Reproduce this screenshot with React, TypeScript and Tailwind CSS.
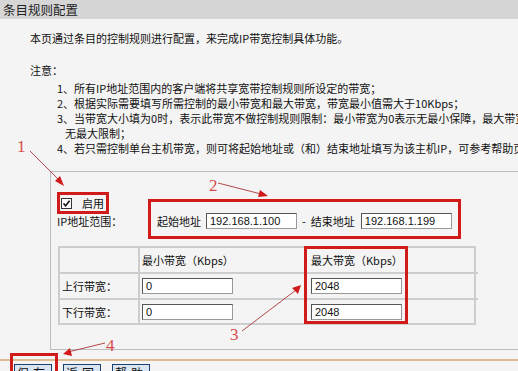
const Input = ({ value, className = "" }: { value: string; className?: string }) => (
  <div
    className={`flex h-[16px] w-[91px] items-center border border-t-[#555] border-l-[#555] border-r-[#999] border-b-[#999] bg-white pl-[3px] font-['Liberation_Sans',sans-serif] text-[11px] leading-[14px] text-[#111] ${className}`}
  >
    {value}
  </div>
);

const Btn = ({ label }: { label: string }) => (
  <div className="flex h-[18px] w-[38px] items-center justify-center border border-[#1f3f6e] bg-[#d9e5f2] text-[12px] leading-[16px] tracking-[4px] text-[#111]">
    {label}
  </div>
);

export default function App() {
  return (
    <div className="relative h-[371px] w-[518px] overflow-hidden bg-[#f4f4f4] font-['Noto_Sans_CJK_SC',sans-serif] text-[11px] text-[#111]">
      <div className="h-[19px] bg-[#d6d6d6] pl-[3px] text-[12.5px] leading-[19px] text-[#222]">条目规则配置</div>

      <div className="whitespace-nowrap pl-[30px] pt-[12px] leading-[14px]">
        <div>本页通过条目的控制规则进行配置，来完成IP带宽控制具体功能。</div>
        <div className="mt-[18px]">注意：</div>
        <div className="mt-[4px] pl-[27px] leading-[15px]">
          <div>1、所有IP地址范围内的客户端将共享宽带控制规则所设定的带宽；</div>
          <div>2、根据实际需要填写所需控制的最小带宽和最大带宽，带宽最小值需大于10Kbps；</div>
          <div>3、当带宽大小填为0时，表示此带宽不做控制规则限制：最小带宽为0表示无最小保障，最大带宽为0表示</div>
          <div className="pl-[8px]">无最大限制；</div>
          <div>4、若只需控制单台主机带宽，则可将起始地址或（和）结束地址填写为该主机IP，可参考帮助页面。</div>
        </div>
      </div>

      <div className="ml-[50px] mt-[15px] box-border h-[179px] border-b border-l border-t border-[#bdbdbd] pl-[6px] pt-[20px]">
        <div className="flex">
          <div className="w-[91px]">
            <div className="flex h-[22px] w-[52px] items-center border-[3px] border-[#d11a1a] pl-[1px]">
              <div className="flex h-[11px] w-[11px] items-center justify-center border border-[#333] bg-white">
                <svg width="9" height="9" viewBox="0 0 9 9">
                  <path d="M1.5 4.5 L3.6 6.8 L7.6 1.8" fill="none" stroke="#111" strokeWidth="1.6" />
                </svg>
              </div>
              <span className="ml-[10px] leading-[14px]">启用</span>
            </div>
            <div className="leading-[14px]">IP地址范围：</div>
          </div>
          <div className="mt-[7px] flex h-[40px] w-[313px] items-center border-[3px] border-[#d11a1a] pl-[6px] pt-[4px]">
            <span className="leading-[14px]">起始地址</span>
            <Input value="192.168.1.100" className="ml-[5px]" />
            <span className="ml-[5px] leading-[14px]">-</span>
            <span className="ml-[5px] leading-[14px]">结束地址</span>
            <Input value="192.168.1.199" className="ml-[6px]" />
          </div>
        </div>

        <div className="relative ml-[1px] mt-[7px] w-[418px]">
          <div className="grid grid-cols-[80px_167px_171px] border-2 border-[#cdcdcd] leading-[14px]">
            <div className="h-[24px] border-r-2 border-[#cdcdcd]"></div>
            <div className="flex h-[24px] items-center border-r-2 border-[#cdcdcd] pl-[2px]">最小带宽（Kbps）</div>
            <div className="flex h-[24px] items-center pl-[4px]">最大带宽（Kbps）</div>

            <div className="flex h-[26px] items-center border-r-2 border-t-2 border-[#cdcdcd] pl-[2px]">上行带宽：</div>
            <div className="flex h-[26px] items-center border-r-2 border-t-2 border-[#cdcdcd] pl-[2px]">
              <Input value="0" />
            </div>
            <div className="flex h-[26px] items-center border-t-2 border-[#cdcdcd] pl-[4px]">
              <Input value="2048" />
            </div>

            <div className="flex h-[25px] items-center border-r-2 border-t-2 border-[#cdcdcd] pl-[2px]">下行带宽：</div>
            <div className="flex h-[25px] items-center border-r-2 border-t-2 border-[#cdcdcd] pl-[2px]">
              <Input value="0" />
            </div>
            <div className="flex h-[25px] items-center border-t-2 border-[#cdcdcd] pl-[4px]">
              <Input value="2048" />
            </div>
          </div>
          <div className="absolute left-[246px] top-0 h-[78px] w-[104px] border-[3px] border-[#d11a1a]"></div>
        </div>
      </div>

      <div className="mt-[9px] h-[2px] bg-[#dcbd92]"></div>
      <div className="flex gap-[11px] pl-[14px] pt-[3px]">
        <Btn label="保存" />
        <Btn label="返回" />
        <Btn label="帮助" />
      </div>
      <div className="absolute left-[10px] top-[353px] h-[25px] w-[48px] border-[3px] border-[#d11a1a]"></div>

      <svg className="pointer-events-none absolute left-0 top-0" width="518" height="371" viewBox="0 0 518 371">
        <g fontFamily="'Liberation Serif', serif" fontSize="17" fill="#d94a4a">
          <text x="17" y="152">1</text>
          <text x="209" y="191">2</text>
          <text x="230" y="340">3</text>
          <text x="106" y="351">4</text>
        </g>
        <g stroke="#b04848" strokeWidth="1" fill="none">
          <line x1="30" y1="151" x2="60" y2="181" />
          <line x1="218" y1="183" x2="261" y2="194" />
          <line x1="242" y1="331" x2="296" y2="290" />
          <line x1="105" y1="343" x2="68" y2="352" />
        </g>
        <g fill="#d11a1a">
          <polygon points="64,186 55,181 60,176" />
          <polygon points="268,196 258,197 260,190" />
          <polygon points="301,285 298,294 292,288" />
          <polygon points="63,354 70,348 72,356" />
        </g>
      </svg>
    </div>
  );
}
